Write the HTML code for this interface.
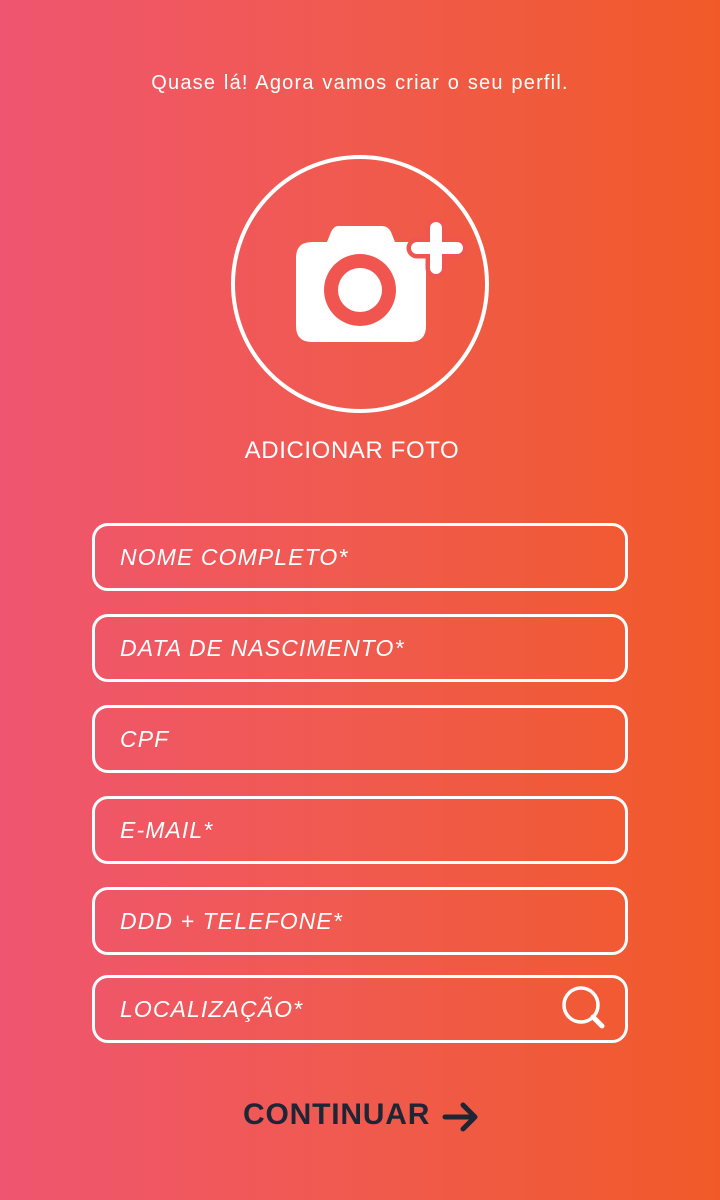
<!DOCTYPE html>
<html><head><meta charset="utf-8"><style>
body{margin:0;width:720px;height:1200px;overflow:hidden;background:linear-gradient(90deg,#ef5570 0%,#f05a4e 50%,#f15a28 100%);font-family:"Liberation Sans",sans-serif;color:#fff;position:relative}
.t{position:absolute;left:0;width:720px;text-align:center}
.f{position:absolute;left:92px;width:530px;height:62px;border:3.5px solid #fff;border-radius:16px}
.f span{position:absolute;left:25px;top:18px;font-size:23px;font-style:italic;font-weight:300;letter-spacing:1.1px}
</style></head><body>
<div class="t" style="top:72px;font-size:20px;letter-spacing:1.2px;word-spacing:1px">Quase lá! Agora vamos criar o seu perfil.</div>
<svg style="position:absolute;left:0;top:0" width="720" height="440">
<circle cx="360" cy="284" r="127" fill="none" stroke="#fff" stroke-width="4"/>
<path d="M338 226 L382 226 Q388 226 391 232 L395 242 L410 242 Q426 242 426 258 L426 326 Q426 342 410 342 L312 342 Q296 342 296 326 L296 258 Q296 242 312 242 L327 242 L331 232 Q334 226 338 226Z" fill="#fff"/>
<circle cx="360" cy="290" r="36" fill="#f0564f"/>
<circle cx="360" cy="290" r="22" fill="#fff"/>
<path d="M436 228 V268 M417 248 H457" stroke="#f0564f" stroke-width="21" stroke-linecap="round"/>
<path d="M436 228 V268 M417 248 H457" stroke="#fff" stroke-width="12" stroke-linecap="round"/>
</svg>
<div class="t" style="top:437px;font-size:24px;font-weight:300;left:-8px;letter-spacing:0.6px">ADICIONAR FOTO</div>
<div class="f" style="top:523px"><span>NOME COMPLETO*</span></div>
<div class="f" style="top:614px"><span>DATA DE NASCIMENTO*</span></div>
<div class="f" style="top:705px"><span>CPF</span></div>
<div class="f" style="top:796px"><span>E-MAIL*</span></div>
<div class="f" style="top:887px"><span>DDD + TELEFONE*</span></div>
<div class="f" style="top:975px"><span>LOCALIZAÇÃO*</span>
<svg style="position:absolute;left:460px;top:4px" width="56" height="56"><circle cx="26" cy="23" r="17" fill="none" stroke="#fff" stroke-width="3.5"/><path d="M38 35 L47 44" stroke="#fff" stroke-width="5" stroke-linecap="round"/></svg></div>
<div style="position:absolute;left:243px;top:1098px;font-size:30px;font-weight:bold;color:#1e2535;letter-spacing:0.8px">CONTINUAR</div>
<svg style="position:absolute;left:442px;top:1101px" width="40" height="32"><path d="M3 16 H33 M21 4 L33 16 L21 28" fill="none" stroke="#1e2535" stroke-width="5" stroke-linecap="round" stroke-linejoin="round"/></svg>
</body></html>
